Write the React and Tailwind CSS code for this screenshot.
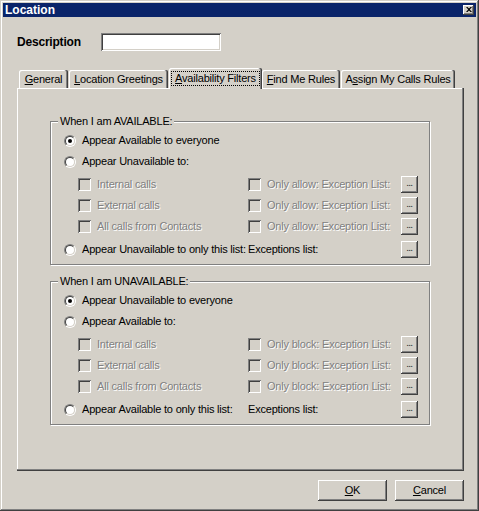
import React from "react";

// classic 3D edges
const raised = "shadow-[inset_-1px_-1px_0_#404040,inset_1px_1px_0_#fff,inset_-2px_-2px_0_#808080]";
const sunken = "shadow-[inset_1px_1px_0_#808080,inset_-1px_-1px_0_#fff,inset_2px_2px_0_#404040,inset_-2px_-2px_0_#d4d0c8]";
const dis = "text-[#808080] [text-shadow:1px_1px_0_#fff]";

const Radio = ({ checked }) => (
  <span className="w-[12px] h-[12px] shrink-0 rounded-full border border-t-[#808080] border-l-[#808080] border-b-white border-r-white flex">
    <span className="flex-1 rounded-full border border-t-[#404040] border-l-[#404040] border-b-[#d4d0c8] border-r-[#d4d0c8] bg-white flex items-center justify-center">
      {checked && <span className="w-[4px] h-[4px] rounded-full bg-black" />}
    </span>
  </span>
);

const Box = () => <span className={`w-[13px] h-[13px] shrink-0 bg-[#d4d0c8] ${sunken}`} />;

const Dots = () => (
  <button type="button" className={`ml-auto w-[17px] h-[17px] shrink-0 bg-[#d4d0c8] flex items-center justify-center ${raised}`}>
    <span className="text-[8px] leading-none font-bold text-[#404040] -mt-[2px]">...</span>
  </button>
);

function RadioRow({ checked, label, extra }) {
  return (
    <div className="h-[21px] flex items-center pl-[13px] pr-[11px] whitespace-nowrap">
      <div className="w-[184px] shrink-0 flex items-center gap-[6px]">
        <Radio checked={checked} />
        <span>{label}</span>
      </div>
      {extra && <span>{extra}</span>}
      {extra && <Dots />}
    </div>
  );
}

function CheckRow({ label, right }) {
  return (
    <div className="h-[21px] flex items-center pl-[27px] pr-[11px] whitespace-nowrap">
      <div className="w-[170px] shrink-0 flex items-center gap-[6px]">
        <Box />
        <span className={dis}>{label}</span>
      </div>
      <div className="flex items-center gap-[6px]">
        <Box />
        <span className={dis}>{right}</span>
      </div>
      <Dots />
    </div>
  );
}

function Group({ label, children }) {
  return (
    <div className="relative w-[380px] h-[144px] border border-[#808080] shadow-[1px_1px_0_#fff,inset_1px_1px_0_#fff] pt-[8px]">
      <span className="absolute -top-[7px] left-[7px] px-[2px] bg-[#d4d0c8] leading-[13px]">{label}</span>
      {children}
    </div>
  );
}

function Filters({ label, first, second, kind, last }) {
  return (
    <Group label={label}>
      <RadioRow checked label={first} />
      <RadioRow label={second} />
      <div className="mt-[2px]">
        <CheckRow label="Internal calls" right={`Only ${kind}: Exception List:`} />
        <CheckRow label="External calls" right={`Only ${kind}: Exception List:`} />
        <CheckRow label="All calls from Contacts" right={`Only ${kind}: Exception List:`} />
      </div>
      <div className="mt-[2px]">
        <RadioRow label={last} extra="Exceptions list:" />
      </div>
    </Group>
  );
}

const tabBase = "shrink-0 flex items-center justify-center bg-[#d4d0c8] rounded-t-[2px] shadow-[inset_-1px_0_0_#404040,inset_-2px_0_0_#808080,inset_1px_1px_0_#fff]";

const Tab = ({ w, children }) => <div className={`${tabBase} h-[18px] ${w}`}>{children}</div>;

const U = ({ children }) => <span className="underline underline-offset-[1px]">{children}</span>;

export default function App() {
  return (
    <div className="w-[479px] h-[511px] bg-[#d4d0c8] p-[3px] text-[11px] tracking-[-0.2px] text-black font-['Liberation_Sans',Arial,sans-serif] shadow-[inset_-1px_-1px_0_#404040,inset_1px_1px_0_#d4d0c8,inset_-2px_-2px_0_#808080,inset_2px_2px_0_#fff] select-none">
      {/* title bar */}
      <div className="h-[14px] bg-[#0a246a] flex items-center pl-[2px] pr-[2px]">
        <span className="text-white font-bold text-[12px] tracking-normal leading-none">Location</span>
        <button type="button" className={`ml-auto w-[11px] h-[10px] bg-[#d4d0c8] flex items-center justify-center ${raised}`}>
          <svg width="6" height="5" viewBox="0 0 6 5" className="-mt-[1px]">
            <path d="M0 0h1.5L3 1.5 4.5 0H6L3.8 2.5 6 5H4.5L3 3.5 1.5 5H0l2.2-2.5z" fill="#000" />
          </svg>
        </button>
      </div>

      <div className="pl-[14px] pr-[12px]">
        {/* description */}
        <div className="mt-[16px] flex items-center h-[18px]">
          <span className="w-[84px] shrink-0 font-bold text-[12px]">Description</span>
          <div className={`w-[120px] h-[18px] bg-white ${sunken}`} />
        </div>

        {/* tabs */}
        <div className="mt-[17px] h-[20px] flex items-end">
          <div className="ml-[2px]"><Tab w="w-[49px]"><U>G</U>eneral</Tab></div>
          <div className="ml-[1px]"><Tab w="w-[99px]"><U>L</U>ocation Greetings</Tab></div>
          <div className={`${tabBase} ml-[1px] w-[93px] h-[21px] -mb-[1px] relative z-10`}>
            <span className="border border-dotted border-black px-[3px] leading-[13px]"><U>A</U>vailability Filters</span>
          </div>
          <Tab w="w-[78px]"><U>F</U>ind Me Rules</Tab>
          <div className="ml-[1px]"><Tab w="w-[114px]">A<U>s</U>sign My Calls Rules</Tab></div>
        </div>

        {/* panel */}
        <div className="w-[447px] h-[383px] pt-[33px] pl-[33px] shadow-[inset_-1px_-1px_0_#404040,inset_-2px_-2px_0_#808080,inset_1px_1px_0_#fff]">
          <Filters
            label="When I am AVAILABLE:"
            first="Appear Available to everyone"
            second="Appear Unavailable to:"
            kind="allow"
            last="Appear Unavailable to only this list:"
          />
          <div className="mt-[16px]">
            <Filters
              label="When I am UNAVAILABLE:"
              first="Appear Unavailable to everyone"
              second="Appear Available to:"
              kind="block"
              last="Appear Available to only this list:"
            />
          </div>
        </div>

        {/* buttons */}
        <div className="mt-[9px] flex justify-end gap-[8px]">
          <button type="button" className={`w-[69px] h-[21px] bg-[#d4d0c8] ${raised}`}><U>O</U>K</button>
          <button type="button" className={`w-[69px] h-[21px] bg-[#d4d0c8] ${raised}`}><U>C</U>ancel</button>
        </div>
      </div>
    </div>
  );
}
